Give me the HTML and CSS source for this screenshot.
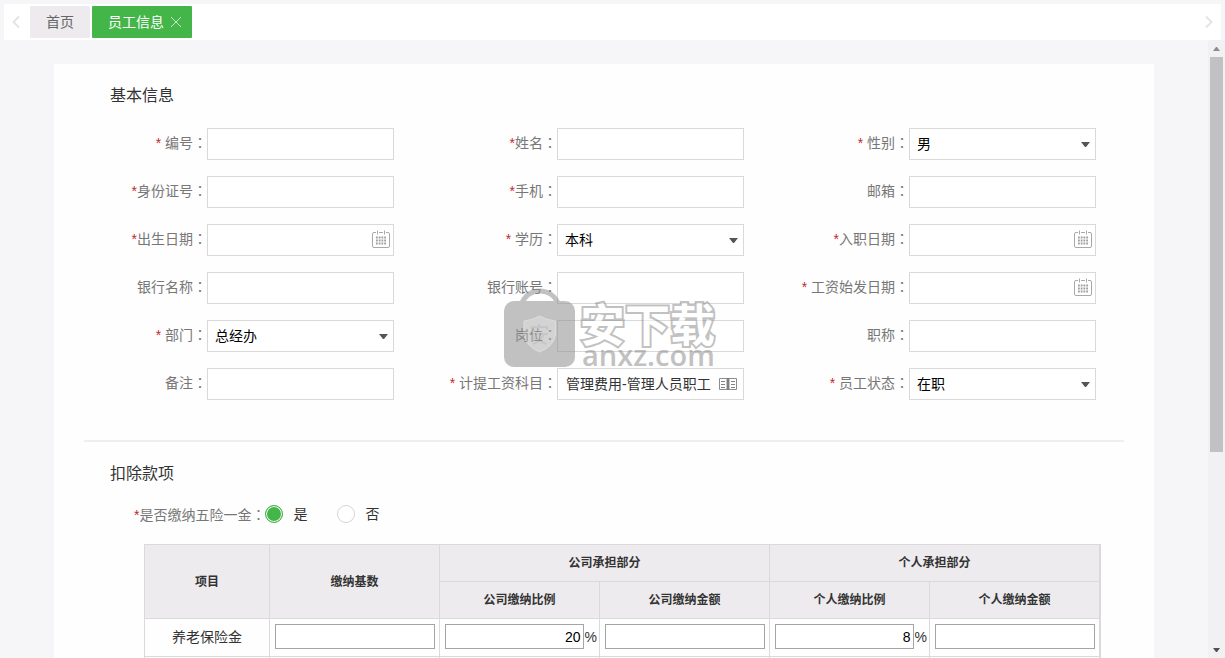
FILE: index.html
```html
<!DOCTYPE html>
<html lang="zh-CN">
<head>
<meta charset="utf-8">
<title>员工信息</title>
<link rel="stylesheet" href="styles.css">
</head>
<body>
<svg class="defs" aria-hidden="true">
  <symbol id="calendar" viewBox="0 0 18 18">
    <path d="M4 2.5H2a1.500 1.500 0 0 0-1.500 1.500v12A1.500 1.500 0 0 0 2 17.500h14a1.500 1.500 0 0 0 1.500-1.500V4A1.500 1.500 0 0 0 16 2.500H14M7 2.500h4M5.500 .5v4M12.500 .5v4" fill="none" stroke="#a9a9a9"/>
    <path d="M4 7.500h10M4 10.500h10M4 13.500h10" fill="none" stroke="#a0a0a0" stroke-width="2" stroke-dasharray="1.800 .93"/>
  </symbol>
  <symbol id="book" viewBox="0 0 18 14">
    <path d="M.5 1.500H8V12.500H.5ZM10 1.500h7.500V12.500H10Z" fill="none" stroke="#8c8c8c"/>
    <path d="M9 1v12" stroke="#808080" stroke-width="2"/>
    <path d="M2 4.500h4M2 7.500h4M2 10.500h4M12 4.500h4M12 7.500h4M12 10.500h4" stroke="#808080"/>
  </symbol>
  <symbol id="caret" viewBox="0 0 9 5"><path d="M0 0h9L5 5H4Z" fill="#555"/></symbol>
</svg>

<nav class="tabs">
  <button class="nav-arrow" aria-label="向左"><svg width="8" height="12" viewBox="0 0 8 12"><path d="M7 .5 1.500 6 7 11.500"/></svg></button>
  <button class="tab">首页</button>
  <button class="tab active">员工信息<svg class="close" width="12" height="12" viewBox="0 0 12 12"><path d="m1 1 10 10M11 1 1 11"/></svg></button>
  <button class="nav-arrow next" aria-label="向右"><svg width="8" height="12" viewBox="0 0 8 12"><path d="M1 .5 6.500 6 1 11.500"/></svg></button>
</nav>

<div class="viewport">
  <main class="page">
    <form class="card">
      <h2 class="title">基本信息</h2>
      <div class="fields">
        <div class="field"><label for="code"><b>* </b>编号<i lang="zh-TW">：</i></label><input id="code" type="text"></div>
        <div class="field"><label for="name"><b>*</b>姓名<i lang="zh-TW">：</i></label><input id="name" type="text"></div>
        <div class="field"><label for="sex"><b>* </b>性别<i lang="zh-TW">：</i></label><span class="box"><select id="sex"><option>男</option></select><svg class="caret"><use href="#caret"/></svg></span></div>

        <div class="field"><label for="idno"><b>*</b>身份证号<i lang="zh-TW">：</i></label><input id="idno" type="text"></div>
        <div class="field"><label for="mobile"><b>*</b>手机<i lang="zh-TW">：</i></label><input id="mobile" type="text"></div>
        <div class="field"><label for="mail">邮箱<i lang="zh-TW">：</i></label><input id="mail" type="text"></div>

        <div class="field"><label for="birth"><b>*</b>出生日期<i lang="zh-TW">：</i></label><span class="box"><input id="birth" type="text"><svg class="calendar"><use href="#calendar"/></svg></span></div>
        <div class="field"><label for="edu"><b>* </b>学历<i lang="zh-TW">：</i></label><span class="box"><select id="edu"><option>本科</option></select><svg class="caret"><use href="#caret"/></svg></span></div>
        <div class="field"><label for="entry"><b>*</b>入职日期<i lang="zh-TW">：</i></label><span class="box"><input id="entry" type="text"><svg class="calendar"><use href="#calendar"/></svg></span></div>

        <div class="field"><label for="bank">银行名称<i lang="zh-TW">：</i></label><input id="bank" type="text"></div>
        <div class="field"><label for="account">银行账号<i lang="zh-TW">：</i></label><input id="account" type="text"></div>
        <div class="field"><label for="pay"><b>* </b>工资始发日期<i lang="zh-TW">：</i></label><span class="box"><input id="pay" type="text"><svg class="calendar"><use href="#calendar"/></svg></span></div>

        <div class="field"><label for="dept"><b>* </b>部门<i lang="zh-TW">：</i></label><span class="box"><select id="dept"><option>总经办</option></select><svg class="caret"><use href="#caret"/></svg></span></div>
        <div class="field"><label for="post">岗位<i lang="zh-TW">：</i></label><input id="post" type="text"></div>
        <div class="field"><label for="rank">职称<i lang="zh-TW">：</i></label><input id="rank" type="text"></div>

        <div class="field"><label for="note">备注<i lang="zh-TW">：</i></label><input id="note" type="text"></div>
        <div class="field"><label for="subject"><b>* </b>计提工资科目<i lang="zh-TW">：</i></label><span class="box"><input id="subject" class="with-book" type="text" value="管理费用-管理人员职工"><svg class="book"><use href="#book"/></svg></span></div>
        <div class="field"><label for="state"><b>* </b>员工状态<i lang="zh-TW">：</i></label><span class="box"><select id="state"><option>在职</option></select><svg class="caret"><use href="#caret"/></svg></span></div>
      </div>

      <hr>

      <h2 class="title">扣除款项</h2>
      <div class="choice" role="radiogroup" aria-labelledby="insured">
        <span id="insured" class="caption"><b>*</b>是否缴纳五险一金<i lang="zh-TW">：</i></span>
        <label><input type="radio" name="insured" checked>是</label>
        <label><input type="radio" name="insured">否</label>
      </div>

      <table>
        <colgroup><col class="c-item"><col class="c-base"><col class="c-rate"><col class="c-base"><col class="c-rate"><col class="c-last"></colgroup>
        <thead>
          <tr><th rowspan="2">项目</th><th rowspan="2">缴纳基数</th><th colspan="2">公司承担部分</th><th colspan="2">个人承担部分</th></tr>
          <tr><th>公司缴纳比例</th><th>公司缴纳金额</th><th>个人缴纳比例</th><th>个人缴纳金额</th></tr>
        </thead>
        <tbody>
          <tr>
            <td>养老保险金</td>
            <td><div class="cell"><input type="text" aria-label="缴纳基数"></div></td>
            <td><div class="cell rate"><input type="text" value="20" aria-label="公司缴纳比例">%</div></td>
            <td><div class="cell"><input type="text" aria-label="公司缴纳金额"></div></td>
            <td><div class="cell rate"><input type="text" value="8" aria-label="个人缴纳比例">%</div></td>
            <td><div class="cell"><input type="text" aria-label="个人缴纳金额"></div></td>
          </tr>
          <tr><td></td><td></td><td></td><td></td><td></td><td></td></tr>
        </tbody>
      </table>

      <div class="watermark">
        <svg width="72" height="80" viewBox="0 0 72 80">
          <path d="M17 17C21 7 28 3 35.500 3S51 7 55 17" fill="none" stroke="#909090" stroke-width="5"/>
          <rect y="13" width="71" height="66" rx="10" fill="#909090"/>
          <path d="M20 33q9-1 15.500-5 7 4 16 5v13q-1 12-16 18-14-6-15.500-18Z" fill="#b0b0b0" stroke="#c4c4c4"/>
          <path d="M28 42v-3h15v3M35 36v3M27 46h17M34 42l-4 8 12 6M40 46q-3 8-11 10" fill="none" stroke="#999" stroke-width="2"/>
        </svg>
        <div class="brand"><span class="brand-name">安下载</span><span class="brand-site">anxz.com</span></div>
      </div>
    </form>
  </main>
  <div class="scrollbar" aria-hidden="true">
    <svg class="cap" viewBox="0 0 17 17"><path d="M5 11h7L9 7H8Z" fill="#8c8c8c"/></svg>
    <div class="thumb"></div>
    <div class="track"></div>
    <svg class="cap" viewBox="0 0 17 17"><path d="M5 7h7l-3 4H8Z" fill="#505050"/></svg>
  </div>
</div>
</body>
</html>
```

FILE: styles.css
```css
* { box-sizing: border-box; }

body {
  display: flex;
  flex-direction: column;
  height: 100vh;
  margin: 0;
  padding-top: 4px;
  overflow: hidden;
  background: #f6f5f8;
  color: #333;
  font: 14px/20px "Liberation Sans", "Noto Sans CJK SC", sans-serif;
}

button, input, select { font: inherit; color: inherit; }
.defs { position: absolute; width: 0; height: 0; }

.tabs {
  display: flex;
  flex: none;
  align-items: center;
  gap: 2px;
  height: 36px;
  margin: 0 4px;
  background: #fff;
}
.tab {
  display: flex;
  align-items: center;
  height: 32px;
  padding: 0 16px;
  border: 0;
  border-radius: 1px;
  background: #edebee;
  color: #666;
}
.tab.active { padding-right: 10px; background: #44b549; color: #fff; }
.close { margin-left: 6px; fill: none; stroke: #c5e8c7; }
.nav-arrow {
  display: flex;
  align-items: center;
  justify-content: center;
  width: 24px;
  height: 32px;
  padding: 0;
  border: 0;
  background: none;
}
.nav-arrow svg { fill: none; stroke: #e4e4e4; stroke-width: 2; }
.next { margin-left: auto; }

.viewport { display: flex; flex: 1; min-height: 0; }
.page { flex: 1; overflow: hidden; padding: 24px 54px 0; }
.card { position: relative; min-height: 100%; padding: 21px 0; background: #fefefe; }

.title { margin: 0 56px; font-size: 16px; line-height: 22px; font-weight: 400; color: #333; }

.fields {
  display: grid;
  grid-template-columns: 284fr 350fr 352fr;
  gap: 16px 0;
  margin: 21px 58px 40px 56px;
}
.field { display: flex; justify-content: flex-end; }
.field label { padding-top: 4px; color: #777; white-space: nowrap; }
.field b, .caption b { color: #c1272d; font-weight: 400; white-space: pre; }
.field i, .caption i { font-family: "Noto Sans CJK TC", sans-serif; font-style: normal; }
.box { position: relative; display: block; width: 187px; }
.field input, .field select {
  display: block;
  width: 187px;
  height: 32px;
  padding: 0 8px;
  border: 1px solid #d9d9d9;
  border-radius: 0;
  background: #fff;
}
.field select { appearance: none; padding: 0 7px; color: #000; }
.field .with-book { padding: 0 30px 2px 8px; }
.caret { position: absolute; top: 14px; right: 6px; width: 9px; height: 5px; }
.calendar { position: absolute; top: 6px; right: 4px; width: 18px; height: 18px; }
.book { position: absolute; top: 9px; right: 7px; width: 18px; height: 14px; }

hr { height: 2px; margin: 0 30px 21px; border: 0; background: #efeff0; }

.choice { display: flex; align-items: center; height: 18px; margin: 20px 80px 21px; }
.caption { color: #777; }
.choice label { display: flex; align-items: center; gap: 10px; margin-right: 30px; }
.choice input {
  appearance: none;
  width: 18px;
  height: 18px;
  margin: 0;
  border: 1px solid #d5d5d5;
  border-radius: 50%;
  background: #fff;
}
.choice input:checked { border-color: #44b549; background: #44b549; box-shadow: inset 0 0 0 1px #fff; }

table {
  width: calc(100% - 143px);
  margin: 0 53px 0 90px;
  table-layout: fixed;
  border-collapse: separate;
  border-spacing: 0;
  border: solid #dad9db;
  border-width: 1px 1px 0;
}
.c-item { width: 125px; }
.c-base { width: 170px; }
.c-rate { width: 160px; }
th, td { padding: 0; border: solid #dad9db; border-width: 0 1px 1px 0; text-align: center; }
th { height: 37px; background: #edebee; font-size: 12px; font-weight: 700; }
td { height: 38px; padding-bottom: 2px; }
.cell { display: flex; align-items: center; padding: 0 4px 0 5px; }
.cell input {
  flex: 1;
  min-width: 0;
  height: 25px;
  padding: 0 2px;
  border: 1px solid #a5a5a5;
  border-radius: 0;
  background: #fff;
  color: #000;
  text-align: right;
}
.rate { gap: 1px; padding-right: 2px; }

.watermark {
  position: absolute;
  top: 224px;
  left: 450px;
  display: flex;
  gap: 4px;
  opacity: .55;
  pointer-events: none;
}
.brand { display: flex; flex-direction: column; padding-top: 14px; }
.brand-name {
  color: #fff;
  font: 700 45px/42px "Noto Sans CJK SC", sans-serif;
  -webkit-text-stroke: 4px #909090;
  paint-order: stroke fill;
}
.brand-site { padding-left: 2px; color: #909090; font: 600 29px/22px "Open Sans", sans-serif; }

.scrollbar { display: flex; flex: none; flex-direction: column; width: 17px; background: #f1f0f3; }
.cap { flex: none; width: 17px; height: 17px; }
.thumb { flex: 395; margin: 0 2px; background: #c1c0c3; }
.track { flex: 189; }
```
